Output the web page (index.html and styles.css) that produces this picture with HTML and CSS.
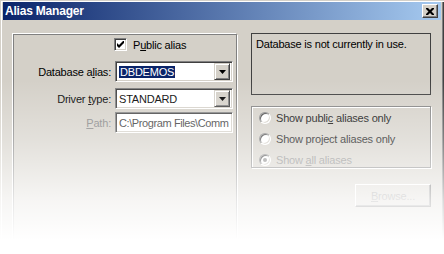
FILE: index.html
```html
<!DOCTYPE html>
<html>
<head>
<meta charset="utf-8">
<link rel="stylesheet" href="styles.css">
</head>
<body>
<div class="window">
  <div class="titlebar">
    <span class="title">Alias Manager</span>
    <div class="close">
      <svg width="8" height="7" viewBox="0 0 8 7"><path d="M0 0h2l2 2 2-2h2v1l-2.5 2.5 2.5 2.5v1h-2l-2-2-2 2h-2v-1l2.5-2.5-2.5-2.5z" fill="#000"/></svg>
    </div>
  </div>
  <div class="client">
    <div class="left-panel">
      <div class="check-row">
        <span class="checkbox">
          <svg width="7" height="7" viewBox="0 0 7 7"><path d="M0 2v3l2 2 5-5v-3l-5 5z" fill="#000"/></svg>
        </span>
        <span class="text">P<u>u</u>blic alias</span>
      </div>
      <div class="field-row first">
        <span class="label">Database a<u>l</u>ias:</span>
        <div class="combo">
          <span class="value"><span class="sel">DBDEMOS</span></span>
          <span class="drop"><svg width="7" height="4" viewBox="0 0 7 4"><path d="M0 0h7l-3.5 4z" fill="#000"/></svg></span>
        </div>
      </div>
      <div class="field-row second">
        <span class="label">Driver <u>t</u>ype:</span>
        <div class="combo">
          <span class="value">STANDARD</span>
          <span class="drop"><svg width="7" height="4" viewBox="0 0 7 4"><path d="M0 0h7l-3.5 4z" fill="#000"/></svg></span>
        </div>
      </div>
      <div class="field-row third">
        <span class="label dim"><u>P</u>ath:</span>
        <div class="edit"><span class="value">C:\Program Files\Comm</span></div>
      </div>
    </div>
    <div class="right-col">
      <div class="memo">Database is not currently in use.</div>
      <div class="radio-group">
        <div class="radio-row">
          <span class="radio"></span>
          <span class="text">Show publi<u>c</u> aliases only</span>
        </div>
        <div class="radio-row">
          <span class="radio"></span>
          <span class="text">Show pro<u>j</u>ect aliases only</span>
        </div>
        <div class="radio-row">
          <span class="radio checked"></span>
          <span class="text">Show <u>a</u>ll aliases</span>
        </div>
      </div>
      <div class="browse-row">
        <div class="button disabled"><u>B</u>rowse...</div>
      </div>
    </div>
  </div>
  <div class="fade"></div>
</div>
</body>
</html>
```

FILE: styles.css
```css
* { box-sizing: border-box; }
html, body { margin: 0; padding: 0; background: #fff; }
body {
  font-family: "Liberation Sans", Arial, sans-serif;
  font-size: 11px;
  letter-spacing: -0.2px;
  color: #000;
}
.window {
  position: relative;
  width: 444px;
  height: 254px;
  overflow: hidden;
  background: #d4d0c8;
  padding: 2px 3px 0 3px;
  box-shadow: inset 1px 1px 0 #d4d0c8, inset 2px 2px 0 #fff, inset -1px 0 0 #404040, inset -2px 0 0 #808080;
}
.titlebar {
  height: 18px;
  display: flex;
  align-items: center;
  justify-content: space-between;
  padding: 0 3px 0 2px;
  background: linear-gradient(to right, #0a246a, #a6caf0);
}
.title {
  color: #fff;
  font-weight: bold;
  font-size: 12px;
  letter-spacing: -0.2px;
}
.close {
  width: 16px;
  height: 14px;
  background: #d4d0c8;
  border: 1px solid;
  border-color: #fff #404040 #404040 #fff;
  box-shadow: inset -1px -1px 0 #808080;
  display: flex;
  align-items: center;
  justify-content: center;
}
.close svg { display: block; }
.client {
  display: flex;
  gap: 14px;
  padding: 13px 0 0 10px;
}
.left-panel {
  width: 224px;
  height: 240px;
  margin-top: 1px;
  border: 1px solid #808080;
  box-shadow: -1px -1px 0 #fff, 1px 1px 0 #fff;
  padding-top: 3px;
}
.check-row {
  display: flex;
  align-items: center;
  padding-left: 100px;
  height: 13px;
}
.checkbox {
  width: 13px;
  height: 13px;
  background: #fff;
  border: 1px solid;
  border-color: #808080 #fff #fff #808080;
  box-shadow: inset 1px 1px 0 #404040, inset -1px -1px 0 #d4d0c8;
  display: flex;
  align-items: center;
  justify-content: center;
  margin-right: 6px;
}
.checkbox svg { display: block; }
.field-row {
  display: flex;
  align-items: center;
  gap: 4px;
}
.field-row.first { margin-top: 10px; }
.field-row.second { margin-top: 6px; }
.field-row.third { margin-top: 3px; }
.label {
  width: 97px;
  text-align: right;
}
.label.dim { color: #808080; }
.combo, .edit {
  width: 118px;
  height: 21px;
  background: #fff;
  border: 1px solid;
  border-color: #808080 #fff #fff #808080;
  box-shadow: inset 1px 1px 0 #404040, inset -1px -1px 0 #d4d0c8;
  display: flex;
  align-items: center;
  padding: 2px;
  overflow: hidden;
}
.value {
  flex: 1;
  white-space: nowrap;
  overflow: hidden;
  padding-left: 1px;
}
.sel {
  background: #0a246a;
  color: #fff;
  padding: 1px 1px;
}
.edit .value {
  color: #303030;
  letter-spacing: -0.4px;
}
.drop {
  width: 16px;
  height: 17px;
  background: #d4d0c8;
  border: 1px solid;
  border-color: #d4d0c8 #404040 #404040 #d4d0c8;
  box-shadow: inset 1px 1px 0 #fff, inset -1px -1px 0 #808080;
  display: flex;
  align-items: center;
  justify-content: center;
  flex: none;
}
.drop svg { display: block; }
.right-col {
  width: 180px;
  display: flex;
  flex-direction: column;
}
.memo {
  height: 62px;
  border: 1px solid #404040;
  padding: 4px 4px;
}
.radio-group {
  margin-top: 11px;
  height: 62px;
  border: 1px solid #808080;
  box-shadow: inset 1px 1px 0 #fff, 1px 1px 0 #fff;
  display: flex;
  flex-direction: column;
  padding-top: 1px;
}
.radio-row {
  height: 20px;
  flex: none;
  display: flex;
  align-items: center;
  padding-left: 7px;
  margin-bottom: 1px;
}
.radio {
  width: 12px;
  height: 12px;
  border-radius: 50%;
  background: #fff;
  border: 1px solid;
  border-color: #808080 #fff #fff #808080;
  box-shadow: inset 1px 1px 0 #404040, inset -1px -1px 0 #d4d0c8;
  margin-right: 5px;
  display: flex;
  align-items: center;
  justify-content: center;
  flex: none;
}
.radio.checked::after {
  content: "";
  width: 4px;
  height: 4px;
  border-radius: 50%;
  background: #808080;
}
.radio-row:last-child { margin-bottom: 0; }
.radio-row:last-child .text { color: #808080; }
.browse-row {
  display: flex;
  justify-content: flex-end;
  margin-top: 16px;
}
.button {
  width: 76px;
  height: 23px;
  background: #d4d0c8;
  border: 1px solid;
  border-color: #fff #404040 #404040 #fff;
  box-shadow: inset -1px -1px 0 #808080;
  display: flex;
  align-items: center;
  justify-content: center;
}
.button.disabled { color: #808080; }
.fade {
  position: absolute;
  left: 0;
  top: 0;
  width: 100%;
  height: 100%;
  pointer-events: none;
  background: linear-gradient(to bottom, rgba(255,255,255,0) 0px, rgba(255,255,255,0) 80px, rgba(255,255,255,0.35) 140px, rgba(255,255,255,0.8) 200px, #fff 240px);
}
```
